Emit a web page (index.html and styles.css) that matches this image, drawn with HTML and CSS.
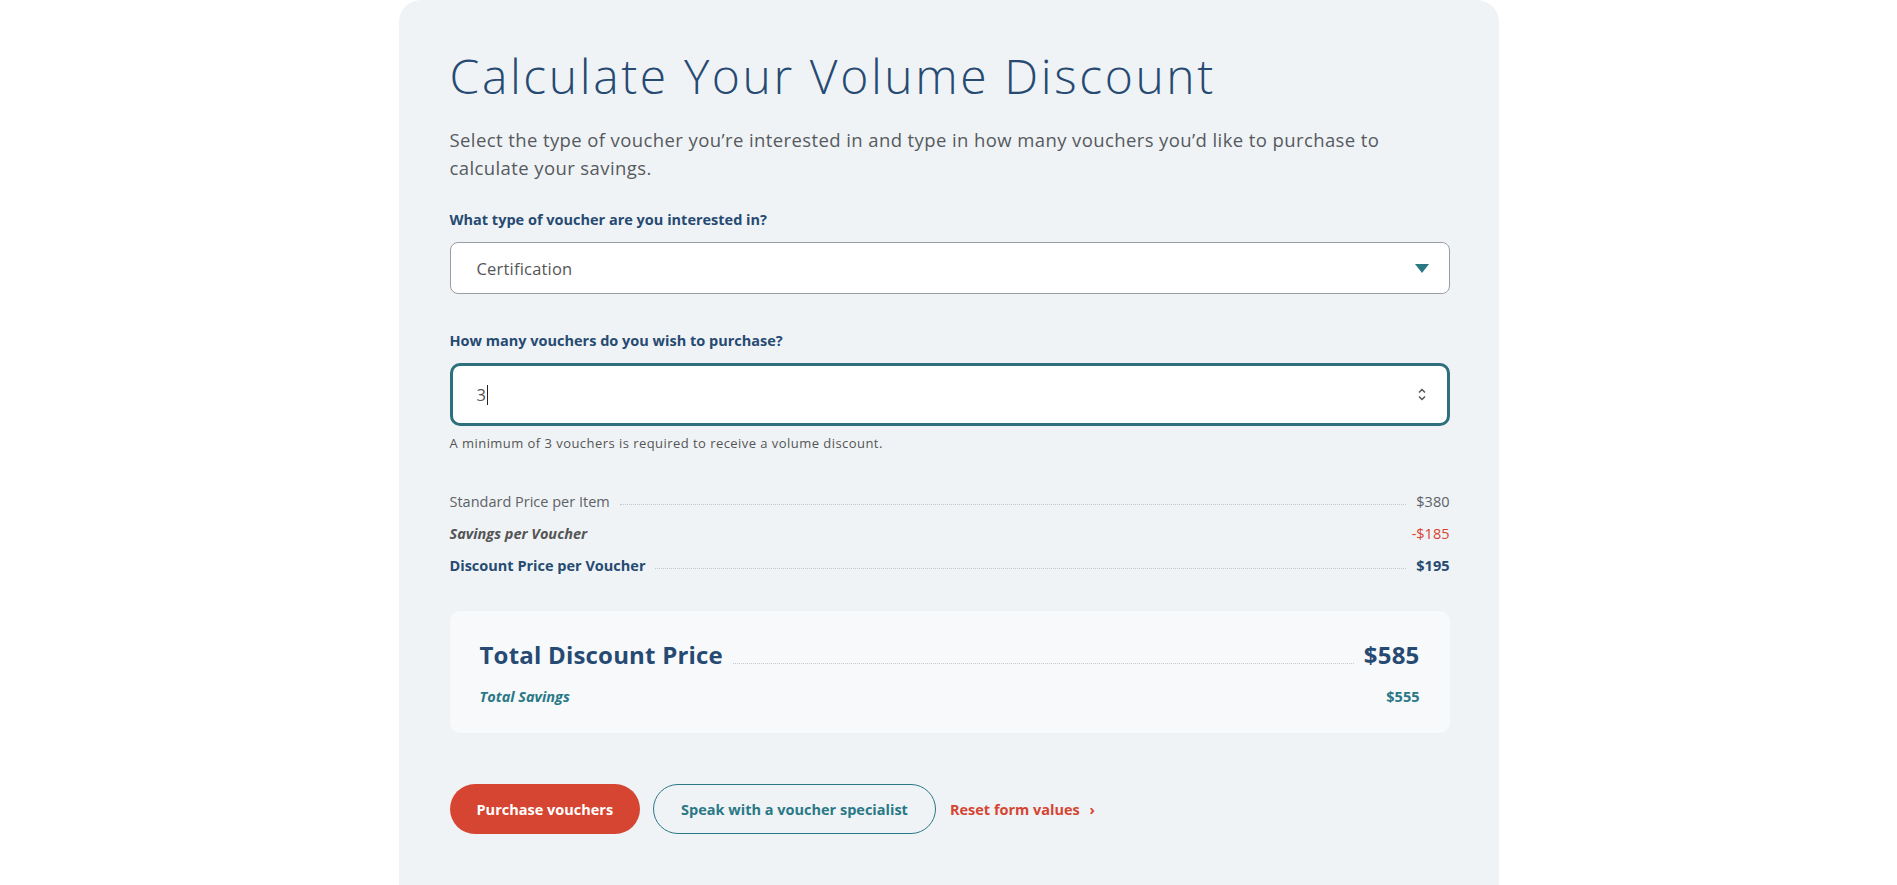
FILE: index.html
```html
<!DOCTYPE html>
<html lang="en">
	<head>
		<meta charset="utf-8" />
		<title>Volume Discount Calculator</title>
		<link rel="stylesheet" href="styles.css">
	</head>
	<body>
		<main class="calc">
			<h1 class="calc-title">Calculate Your Volume Discount</h1>
			<p class="calc-intro">Select the type of voucher you’re interested in and type in how many vouchers you’d like to purchase to calculate your savings.</p>

			<div class="field">
				<label class="field-label">What type of voucher are you interested in?</label>
				<div class="select">
					<span>Certification</span>
					<svg class="select-arrow" width="14" height="9" viewBox="0 0 14 9"><path d="M0 0h14L7 9z" fill="#2a7886"/></svg>
				</div>
			</div>

			<div class="field field-qty">
				<label class="field-label">How many vouchers do you wish to purchase?</label>
				<div class="number">
					<span class="number-value">3</span><span class="number-caret"></span>
					<svg class="spinner" width="8" height="13" viewBox="0 0 8 13"><path d="M1 4.5L4 1.5L7 4.5M1 8.5L4 11.5L7 8.5" fill="none" stroke="#555" stroke-width="1.5"/></svg>
				</div>
				<p class="hint">A minimum of 3 vouchers is required to receive a volume discount.</p>
			</div>

			<ul class="breakdown">
				<li class="row row-standard"><span>Standard Price per Item</span><span class="dots"></span><span>$380</span></li>
				<li class="row row-savings"><span>Savings per Voucher</span><span class="gap"></span><span class="amount">-$185</span></li>
				<li class="row row-discount"><span>Discount Price per Voucher</span><span class="dots"></span><span>$195</span></li>
			</ul>

			<div class="total">
				<div class="total-main"><span>Total Discount Price</span><span class="dots"></span><span>$585</span></div>
				<div class="total-savings"><span>Total Savings</span><span>$555</span></div>
			</div>

			<div class="actions">
				<a class="btn btn-primary" href="#">Purchase vouchers</a>
				<a class="btn btn-outline" href="#">Speak with a voucher specialist</a>
				<a class="reset" href="#">Reset form values <span class="chev">›</span></a>
			</div>
		</main>
	</body>
</html>
```

FILE: styles.css
```css
body {
	margin: 0;
	background: #fff;
	font-family: "Open Sans", "Liberation Sans", sans-serif;
	color: #555;
}
.calc {
	width: 1000px;
	margin: 0 auto;
	padding: 44px 49px 60px 51px;
	min-height: 781px;
	background: #eff3f6;
	border-radius: 22px 22px 0 0;
}
.calc-title {
	margin: 0;
	font-size: 48px;
	line-height: 64px;
	font-weight: 300;
	color: #264a72;
	letter-spacing: 2.6px;
}
.calc-intro {
	margin: 18px 0 0;
	width: 960px;
	font-size: 18.5px;
	line-height: 28px;
	letter-spacing: 0.4px;
	color: #565a5e;
}

.field {
	margin-top: 28px;
}
.field-qty {
	margin-top: 37px;
}
.field-label {
	display: block;
	font-size: 14.5px;
	font-weight: 700;
	color: #264a72;
	line-height: 20px;
	margin-bottom: 12px;
}
.select {
	display: flex;
	align-items: center;
	justify-content: space-between;
	height: 50px;
	padding: 0 20px 0 26px;
	background: #fff;
	border: 1px solid #9a9ea3;
	border-radius: 8px;
	font-size: 16.5px;
	letter-spacing: 0.2px;
	color: #555;
}
.number {
	display: flex;
	align-items: center;
	height: 57px;
	padding: 0 21px 0 24px;
	background: #fff;
	border: 3px solid #2d6f7d;
	border-radius: 10px;
	font-size: 16.5px;
	color: #555;
}
.number-caret {
	width: 1px;
	height: 20px;
	margin-left: 1px;
	background: #222;
}
.spinner {
	margin-left: auto;
}
.hint {
	margin: 8px 0 0;
	font-size: 13px;
	line-height: 18px;
	letter-spacing: 0.45px;
	color: #555;
}

.breakdown {
	list-style: none;
	margin: 34px 0 0;
	padding: 0;
}
.row {
	display: flex;
	align-items: baseline;
	height: 32px;
	line-height: 32px;
	font-size: 14.5px;
}
.dots {
	flex: 1;
	margin: 0 10px;
	border-bottom: 1px dotted #c4c8cc;
	transform: translateY(-2px);
}
.gap {
	flex: 1;
}
.row-standard {
	color: #5e6266;
}
.row-savings {
	font-weight: 700;
	font-style: italic;
	color: #555;
}
.row-savings .amount {
	font-weight: 400;
	font-style: normal;
	color: #d9432f;
}
.row-discount {
	font-weight: 700;
	color: #264a72;
}

.total {
	margin-top: 29px;
	padding: 28px 30px 26px 30px;
	background: #f7f9fb;
	border-radius: 10px;
}
.total-main {
	display: flex;
	align-items: baseline;
	font-size: 24px;
	font-weight: 700;
	line-height: 32px;
	letter-spacing: 0.2px;
	color: #264a72;
}
.total-main .dots {
	transform: none;
}
.total-savings {
	display: flex;
	justify-content: space-between;
	margin-top: 16px;
	font-size: 14.5px;
	line-height: 20px;
	font-weight: 700;
	color: #2a7886;
}
.total-savings span:first-child {
	font-style: italic;
}

.actions {
	display: flex;
	align-items: center;
	gap: 13px;
	margin-top: 51px;
}
.btn {
	display: flex;
	align-items: center;
	justify-content: center;
	height: 50px;
	padding: 0 27px;
	box-sizing: border-box;
	border-radius: 25px;
	font-size: 14.5px;
	font-weight: 700;
	white-space: nowrap;
	text-decoration: none;
}
.btn-primary {
	background: #d64532;
	color: #fff;
}
.btn-outline {
	border: 1px solid #2a7886;
	color: #2a7886;
}
.reset {
	margin-left: 1px;
	font-size: 14.5px;
	font-weight: 700;
	color: #d64532;
	text-decoration: none;
}
.chev {
	margin-left: 6px;
}
```
